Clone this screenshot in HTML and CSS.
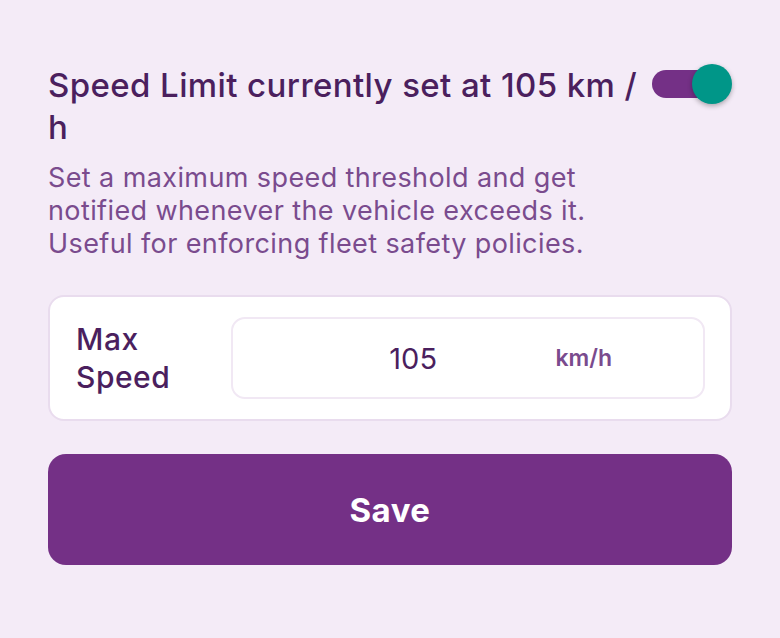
FILE: index.html
```html
<!DOCTYPE html>
<html lang="en">
<head>
<meta charset="UTF-8">
<meta name="viewport" content="width=device-width, initial-scale=1.0">
<title>Speed Limit</title>
<link rel="stylesheet" href="styles.css">
</head>
<body>
  <div class="panel">
    <div class="header">
      <h2 class="title">Speed Limit currently set at 105 km / h</h2>
      <div class="switch">
        <div class="track"></div>
        <div class="knob"></div>
      </div>
    </div>
    <p class="desc">Set a maximum speed threshold and get notified whenever the vehicle exceeds it. Useful for enforcing fleet safety policies.</p>
    <div class="card">
      <div class="label">Max Speed</div>
      <div class="field">
        <span class="value">105</span>
        <span class="unit">km/h</span>
      </div>
    </div>
    <button class="save">Save</button>
  </div>
</body>
</html>
```

FILE: styles.css
```css
body {
  margin: 0;
  background: #f4ebf7;
  font-family: Inter, "Noto Sans", sans-serif;
}

.panel {
  padding: 64px 48px 0 48px;
}

.header {
  display: flex;
  align-items: flex-start;
  gap: 14px;
}

.title {
  flex: 1;
  margin: 0;
  font-size: 33px;
  line-height: 42px;
  font-weight: 500;
  letter-spacing: 0.4px;
  color: #4b1f5e;
}

.switch {
  position: relative;
  width: 80px;
  height: 40px;
}

.track {
  position: absolute;
  left: 0;
  top: 6px;
  width: 60px;
  height: 28px;
  border-radius: 14px;
  background: #743086;
}

.knob {
  position: absolute;
  right: 0;
  top: 0;
  width: 40px;
  height: 40px;
  border-radius: 50%;
  background: #009688;
  box-shadow: 0 2px 5px rgba(0, 0, 0, 0.3);
}

.desc {
  margin: 13px 0 0 0;
  max-width: 560px;
  font-size: 27px;
  line-height: 33px;
  letter-spacing: 0.4px;
  color: #7a4b8e;
}

.card {
  display: flex;
  align-items: center;
  margin-top: 35px;
  padding: 20px 25px 20px 26px;
  background: #fff;
  border: 2px solid #e9dcee;
  border-radius: 16px;
}

.label {
  width: 140px;
  margin-right: 15px;
  font-size: 30px;
  line-height: 38px;
  font-weight: 500;
  letter-spacing: 0.5px;
  color: #4b1f5e;
}

.field {
  flex: 1;
  display: flex;
  align-items: center;
  height: 82px;
  box-sizing: border-box;
  border: 2px solid #f1e8f4;
  border-radius: 14px;
}

.value {
  flex: 1;
  padding-left: 38px;
  text-align: center;
  font-size: 29px;
  color: #4b1f5e;
}

.unit {
  padding-right: 91px;
  font-size: 23px;
  font-weight: 600;
  color: #7a4b8e;
}

.save {
  display: block;
  width: 100%;
  height: 111px;
  margin-top: 33px;
  border: none;
  border-radius: 18px;
  background: #743086;
  color: #fff;
  font-family: Inter, "Noto Sans", sans-serif;
  font-size: 33px;
  font-weight: 700;
  letter-spacing: 0.5px;
}
```
